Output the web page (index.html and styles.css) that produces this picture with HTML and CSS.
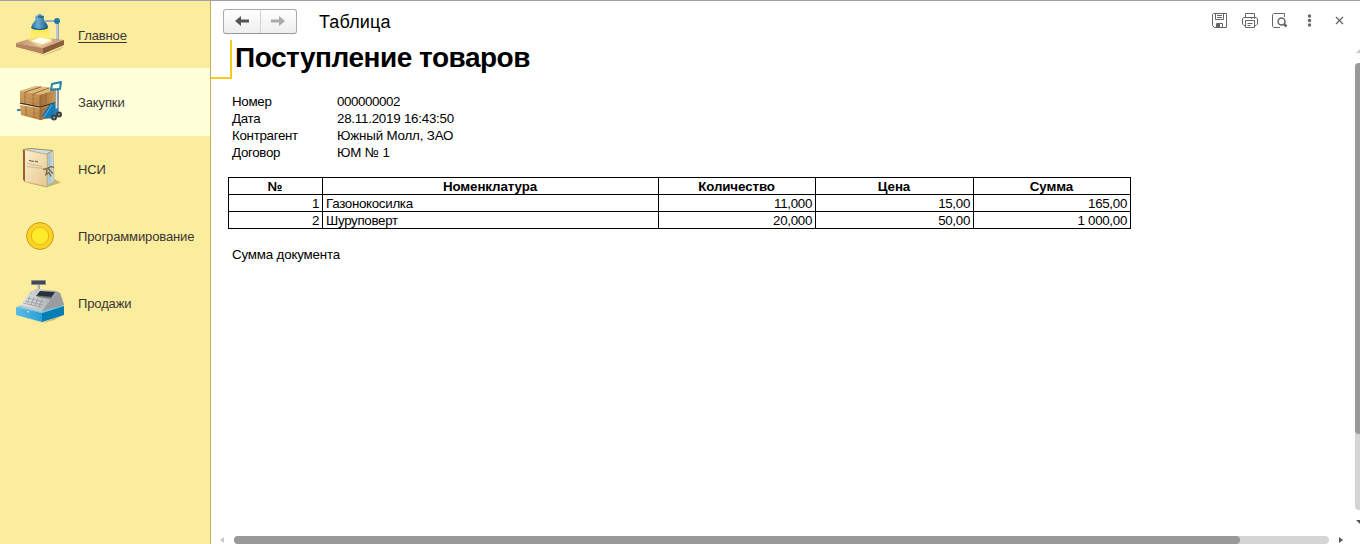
FILE: index.html
```html
<!DOCTYPE html>
<html lang="ru">
<head>
<meta charset="utf-8">
<title>Таблица</title>
<link rel="stylesheet" href="styles.css">
</head>
<body>
<div class="app">
  <nav class="sidebar">
    <a class="section section-main">
      <svg class="section-icon" viewBox="0 -2 48 48">
        <defs>
          <linearGradient id="lamp" x1="0" x2="1"><stop offset="0" stop-color="#1f6f9f"/><stop offset=".4" stop-color="#69acd0"/><stop offset="1" stop-color="#175a88"/></linearGradient>
          <linearGradient id="light" x1="0" y1="0" x2="0" y2="1"><stop offset="0" stop-color="#ffe838"/><stop offset="1" stop-color="#fff7a8" stop-opacity=".5"/></linearGradient>
          <linearGradient id="wood" x1="0" x2="1"><stop offset="0" stop-color="#c08f6c"/><stop offset=".5" stop-color="#e0bd96"/><stop offset="1" stop-color="#c99c76"/></linearGradient>
        </defs>
        <path d="M8 37L28 42L48 33L44 37L28 42.500Z" fill="#b9a870" opacity=".6"/>
        <path d="M0 30L21 23.500L48 27L27 35Z" fill="url(#wood)"/>
        <path d="M0 30L27 35V41L0 34Z" fill="#b58562"/>
        <path d="M27 35L48 27V32L27 41Z" fill="#8b5d3f"/>
        <path d="M16 15H32L36 29L23 33L12 27Z" fill="url(#light)"/>
        <path d="M15 28L24 24.500L36 27L27 31Z" fill="#fffff0"/>
        <path d="M28 8H40" stroke="#9fabb5" stroke-width="2"/>
        <path d="M41.500 10V27" stroke="#9ba4b1" stroke-width="3"/>
        <path d="M41 10V26" stroke="#e4e8ef" stroke-width="1"/>
        <circle cx="41" cy="8" r="3" fill="#2478a5"/>
        <path d="M19.500 3L22 2V1H25V2L28 3V8C31 10 32 12 32 15C28 18 19 18 15 15C16 11 18 9 19.500 7Z" fill="url(#lamp)"/>
        <path d="M16 15Q24 18 31 15" stroke="#17557d" fill="none"/>
        <path d="M22 4H27" stroke="#17435e"/>
      </svg>
      <span class="section-name section-name-linked">Главное</span>
    </a>
    <a class="section section-active">
      <svg class="section-icon" viewBox="0 -3 48 48">
        <defs>
          <linearGradient id="box" x1="0" x2="1" y2="1"><stop offset="0" stop-color="#d8aa68"/><stop offset="1" stop-color="#a97336"/></linearGradient>
          <linearGradient id="side" x1="0" x2="1"><stop offset="0" stop-color="#a06d35"/><stop offset="1" stop-color="#d0a260"/></linearGradient>
        </defs>
        <path d="M1 29H5" stroke="#39849b" stroke-width="2" fill="none"/>
        <path d="M4 24L24 27L42 22V35L24 39L5 34Z" fill="url(#box)"/>
        <path d="M24 27L42 22V35L24 39Z" fill="url(#side)"/>
        <path d="M4 10L20 5L43 8V20L24 25L4 21Z" fill="url(#box)"/>
        <path d="M4 10L20 5L43 8L24 14Z" fill="#dfba7e"/>
        <path d="M24 14L43 8V20L24 25Z" fill="url(#side)"/>
        <path d="M4 22L24 26L42 21" stroke="#4f3016" stroke-width="1.500" fill="none"/>
        <path d="M24 14V25M24 28V39" stroke="#8a6035" fill="none" stroke-width=".7"/>
        <path d="M9 11L25 6M17 13L33 7M9 11V22M17 13V24M10 25V35M18 27V37M30 12V23M30 27V37" stroke="#9a6a38" fill="none"/>
        <path d="M6 13L23 17M6 18L22 21M6 27L23 31M6 31L22 35" stroke="#c59858" stroke-width=".7"/>
        <path d="M34 23L39 22L43 33L39 38L29 37L26 35Z" fill="#167ab5"/>
        <path d="M28 36L36 24" stroke="#56b6d9"/>
        <path d="M41 7V31" stroke="#788795" stroke-width="3.500"/>
        <path d="M40.500 7V31" stroke="#e1e6eb" stroke-width="1.500"/>
        <path d="M36 3L45 1L44 8L35 9Z" fill="none" stroke="#2485af" stroke-width="2" stroke-linejoin="round"/>
        <path d="M39 28L42 27V34L38 35Z" fill="#2484ba"/>
        <circle cx="38" cy="36.500" r="3" fill="#404349"/><circle cx="38" cy="36.500" r="1" fill="#a5a8ac"/>
        <circle cx="43" cy="33.500" r="3" fill="#3b3e44"/><circle cx="43" cy="33.500" r="1" fill="#a5a8ac"/>
      </svg>
      <span class="section-name">Закупки</span>
    </a>
    <a class="section">
      <svg class="section-icon" viewBox="0 -1.500 48 48">
        <defs>
          <linearGradient id="folder" x1="0" x2="1" y1="0" y2="1"><stop offset="0" stop-color="#fff1cf"/><stop offset="1" stop-color="#e5c891"/></linearGradient>
          <linearGradient id="pages" x1="0" x2="1"><stop offset="0" stop-color="#a9c6d0"/><stop offset="1" stop-color="#ddecef"/></linearGradient>
        </defs>
        <path d="M10 36L30 41L45 36L37 32Z" fill="#b9a35d" opacity=".75"/>
        <path d="M7 3L15 2L37 4L30 8Z" fill="#cadfe3" stroke="#83672e" stroke-width=".7"/>
        <path d="M31 8L37 4L38 35L31 40Z" fill="url(#pages)" stroke="#9b9872" stroke-width=".6"/>
        <path d="M33 8L34 37M35 6L36 35" stroke="#8fa9b0" stroke-width=".6"/>
        <path d="M7 3L31 8V40L8 35Z" fill="url(#folder)" stroke="#cbae76" stroke-width=".6"/>
        <path d="M7 3L9 4V35L7 33Z" fill="#9a6035"/>
        <path d="M13 14L18 15M19 14.500L22 15.500" stroke="#695b45" stroke-width="1.200"/>
        <path d="M11 17L26 20M11 20L27 22" stroke="#b5a98d" stroke-width=".7"/>
        <path d="M27 23L31 22L35 20L38 21M31 23L30 28L33 26L35 30M32 22L37 27" fill="none" stroke="#867148" stroke-width="1.500"/>
      </svg>
      <span class="section-name">НСИ</span>
    </a>
    <a class="section">
      <svg class="section-icon" viewBox="0 0 48 48">
        <circle cx="24" cy="24" r="13.400" fill="#fed12b" stroke="#c6a00b"/>
        <circle cx="24" cy="24" r="8.700" fill="#ffe929" stroke="#dfb918"/>
      </svg>
      <span class="section-name">Программирование</span>
    </a>
    <a class="section">
      <svg class="section-icon" viewBox="0 -1 48 48">
        <defs>
          <linearGradient id="till" x1="0" x2="1"><stop offset="0" stop-color="#e8e9ea"/><stop offset=".6" stop-color="#b7babe"/><stop offset="1" stop-color="#898c91"/></linearGradient>
          <linearGradient id="drawer" x1="0" x2="1"><stop offset="0" stop-color="#5bbce7"/><stop offset="1" stop-color="#279fd6"/></linearGradient>
        </defs>
        <path d="M4 36L26 43L47 35L38 40L27 43Z" fill="#a99b61" opacity=".7"/>
        <path d="M0 27L18 22L48 26L26 33Z" fill="#72c6e9"/>
        <path d="M0 27L26 33V42L0 35Z" fill="url(#drawer)"/>
        <path d="M26 33L48 26V35L26 42Z" fill="#087eb4"/>
        <path d="M4 25L14 12L20 9L40 11L44 13L48 25L26 31Z" fill="url(#till)"/>
        <path d="M26 31L36 18L44 13L48 25Z" fill="#999da2"/>
        <path d="M4 25L26 30V32L4 27Z" fill="#c7c8ca"/>
        <path d="M9 21L27 25M11 18L28 22M7 23L25 27M14 16L11 23M18 17L15 25M22 18L19 26M26 19L23 27" stroke="#8a8d91" stroke-width=".6"/>
        <path d="M24 11L39 12L35 18L20 16Z" fill="#29323a"/>
        <path d="M22 17L35 19L36 17L21 15.500Z" fill="#737a81"/>
        <path d="M15 12L21 10L20 12L14 14Z" fill="#f2f2ee" stroke="#989b9f" stroke-width=".5"/>
        <path d="M22.500 5V9" stroke="#9b9c9f" stroke-width="3"/>
        <path d="M22 5V9" stroke="#f0f0f0"/>
        <path d="M15.500 .5H29.500V4.500H15.500Z" fill="#424850" stroke="#8b8c89"/>
        <path d="M11 31H13V32L12 33Z" fill="#bce7f7"/>
      </svg>
      <span class="section-name">Продажи</span>
    </a>
  </nav>

  <main class="content">
    <header class="toolbar">
      <div class="history">
        <button class="history-button" aria-label="Назад"><svg width="14" height="12" viewBox="0 0 14 12"><path d="M6 1V4.500H14V7.500H6V11L0 6Z" fill="#555"/></svg></button>
        <button class="history-button" aria-label="Вперед"><svg width="14" height="12" viewBox="0 0 14 12"><path d="M8 1V4.500H0V7.500H8V11L14 6Z" fill="#aaa"/></svg></button>
      </div>
      <h1 class="window-title">Таблица</h1>
      <div class="actions">
        <svg width="16" height="16" viewBox="0 0 16 16" class="icon"><path d="M1.500 .5H14.500V14.500H2.500L.5 12.500V1.500Z"/><path d="M3.500 1V6.500H11.500V1M5 2.500H10M5 4.500H10M4.500 14V10.500H10.500V14"/><path d="M5 11H8V14H5Z" class="solid"/></svg>
        <svg width="16" height="16" viewBox="0 0 16 16" class="icon"><path d="M3.500 4V.5H12.500V4M3.500 12.500H2L.5 11V5.500L2 4.500H14L15.500 5.500V11L14 12.500H12.500M3.500 7.500H12.500V14.500H3.500ZM5.500 10.500H10.500M5.500 12.500H8.500M9 5.500H10M12 5.500H13"/></svg>
        <svg width="16" height="16" viewBox="0 0 16 16" class="icon"><path d="M8 14.500H1.500L.5 13.500V1.500L1.500 .5H12.500V4"/><circle cx="9.500" cy="8.500" r="3.500" stroke-width="1.500"/><path d="M12 11L14.500 13.500" stroke-width="2.500"/></svg>
        <svg width="16" height="16" viewBox="0 0 16 16" class="icon"><g class="solid"><circle cx="7.500" cy="3" r="1.700"/><circle cx="7.500" cy="7.500" r="1.700"/><circle cx="7.500" cy="12" r="1.700"/></g></svg>
        <svg width="16" height="16" viewBox="0 0 16 16" class="icon"><path d="M4 4L11 11M11 4L4 11" stroke-width="1.300"/></svg>
      </div>
    </header>

    <div class="viewer">
      <section class="sheet">
        <div class="heading-row"><span class="cell-cursor"></span><h2 class="heading">Поступление товаров</h2></div>
        <dl class="details">
          <dt>Номер</dt><dd><span class="number">000000002</span></dd>
          <dt>Дата</dt><dd><span class="date">28.11.2019 16:43:50</span></dd>
          <dt>Контрагент</dt><dd><span class="partner">Южный Молл, ЗАО</span></dd>
          <dt>Договор</dt><dd><span class="partner">ЮМ № 1</span></dd>
        </dl>
        <div class="goods">
          <b>№</b><b>Номенклатура</b><b>Количество</b><b>Цена</b><b>Сумма</b>
          <span class="num">1</span><span>Газонокосилка</span><span class="num">11,000</span><span class="num">15,00</span><span class="num">165,00</span>
          <span class="num">2</span><span>Шуруповерт</span><span class="num">20,000</span><span class="num">50,00</span><span class="num">1 000,00</span>
        </div>
        <p class="total">Сумма документа</p>
      </section>
      <div class="scroll-y">
        <svg width="5" height="4" viewBox="0 0 5 4"><path d="M1 4L5 0V4Z" fill="#c8c8c8"/></svg>
        <div class="track-y"><div class="thumb-y"></div></div>
        <svg width="5" height="4" viewBox="0 0 5 4"><path d="M1 0H5V4Z" fill="#555"/></svg>
      </div>
    </div>
    <div class="scroll-x">
      <svg width="4" height="6" viewBox="0 0 4 6"><path d="M4 0V6L0 3Z" fill="#c8c8c8"/></svg>
      <div class="track-x"><div class="thumb-x"></div></div>
      <svg width="4" height="6" viewBox="0 0 4 6"><path d="M0 0V6L4 3Z" fill="#555"/></svg>
    </div>
  </main>
</div>
</body>
</html>
```

FILE: styles.css
```css
* { box-sizing: border-box; }
body { margin: 0; overflow: hidden; background: #fff; color: #000; font-family: "Liberation Sans", Arial, sans-serif; }
.app { display: flex; height: 544px; border-top: 1px solid #a0a0a0; }
.sidebar { width: 211px; flex: none; background: #fbed9e; border-right: 1px solid #bfb15f; }
.section { display: flex; align-items: center; gap: 14px; height: 67px; padding-left: 16px; }
.section-active { height: 68px; margin-bottom: -1px; padding-bottom: 1px; background: #ffffd9; }
.section-icon { width: 48px; height: 48px; flex: none; }
.section-name { font-size: 13px; line-height: 16px; letter-spacing: -.12px; color: #3b3434; white-space: nowrap; padding-top: 3px; }
.section-name-linked { text-decoration: underline; text-underline-offset: 2px; }
.content { flex: 1; min-width: 0; display: flex; flex-direction: column; }
.toolbar { display: flex; align-items: center; height: 39px; padding: 0 12px; }
.history { display: flex; width: 74px; height: 25px; margin-top: 1px; border: 1px solid #aaa; border-bottom-color: #999; border-radius: 3px; background: linear-gradient(#fff, #eee); }
.history-button { display: flex; flex: 1; align-items: center; justify-content: center; padding: 0; border: 0; background: none; }
.history-button + .history-button { border-left: 1px solid #d0d0d0; }
.window-title { margin: 2px 0 0 22px; font-size: 18px; font-weight: 400; line-height: 22px; letter-spacing: .15px; }
.actions { display: flex; gap: 14px; margin-left: auto; }
.icon { fill: none; stroke: #666; stroke-width: 1; }
.icon .solid { fill: #666; stroke: none; }
.viewer { display: flex; flex: none; height: 490px; }
.sheet { flex: 1; font-size: 13.33px; line-height: 17px; letter-spacing: -.3px; }
.heading-row { display: flex; height: 38px; }
.cell-cursor { width: 21px; height: 39px; border-right: 2px solid #fac91e; border-bottom: 2px solid #fac91e; }
.heading { margin: 0 0 0 3px; font-size: 28px; line-height: 35px; letter-spacing: -.48px; }
.details { display: grid; grid-template-columns: 105px 1fr; grid-auto-rows: 17px; margin: 15px 0 0 21px; }
.details dd { margin: 0; }
.number { letter-spacing: -.4px; }
.date { letter-spacing: -.23px; }
.partner { letter-spacing: -.17px; }
.goods { display: grid; grid-template-columns: 94px 336px 157px 158px 157px; grid-auto-rows: 17px; width: 903px; margin: 16px 0 0 17px; border: solid #000; border-width: 1px 0 0 1px; }
.goods > * { padding: 0 3px; border: solid #000; border-width: 0 1px 1px 0; white-space: nowrap; }
.goods b { text-align: center; padding-right: 4px; letter-spacing: -.1px; }
.goods .num { text-align: right; padding-right: 3px; }
.total { margin: 17px 0 0 21px; letter-spacing: -.17px; }
.scroll-y { display: flex; flex-direction: column; width: 5px; padding-top: 9px; }
.track-y { height: 447px; margin: 10px 0; border-radius: 4px 0 0 4px; background: #d5d5d5; }
.thumb-y { height: 371px; border-radius: 4px 0 0 4px; background: #999; }
.scroll-x { display: flex; flex: none; align-items: center; height: 8px; margin-top: 6px; padding-left: 9px; }
.track-x { width: 1095px; height: 8px; margin: 0 10px; border-radius: 4px; background: #d5d5d5; }
.thumb-x { width: 1006px; height: 8px; border-radius: 4px; background: #999; }
```
